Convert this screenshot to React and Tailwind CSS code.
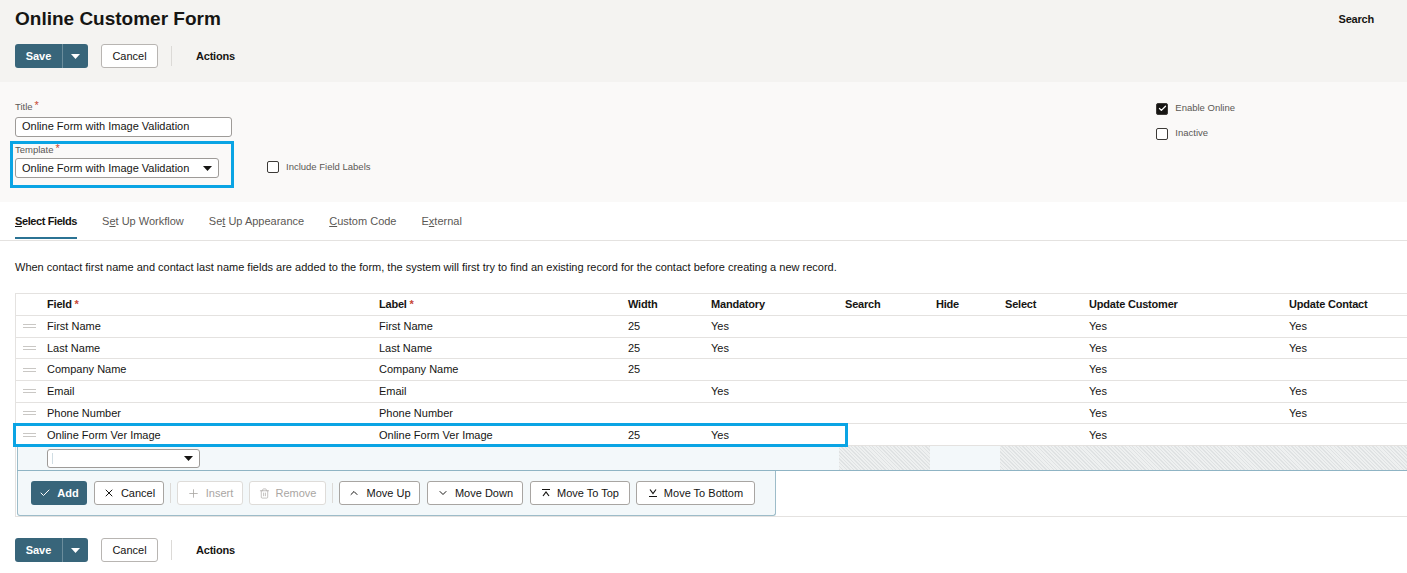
import React from 'react';
import { Check, X, Plus, Trash2, ChevronUp, ChevronDown } from 'lucide-react';

const font = { fontFamily: '"Liberation Sans", Arial, sans-serif' };

const Caret = ({ className = '' }) => (
  <svg width="9" height="5" viewBox="0 0 9 5" className={className}>
    <path d="M0 0h9L4.5 5z" fill="currentColor" />
  </svg>
);

const SaveBar = () => (
  <div className="flex items-center h-6">
    <div className="flex h-6 rounded-[3px] overflow-hidden bg-[#38657a] text-white">
      <button className="w-[47px] text-[11px] font-bold">Save</button>
      <div className="w-px bg-[#6b8d9c]" />
      <button className="w-[25px] flex items-center justify-center">
        <Caret />
      </button>
    </div>
    <button className="ml-[13px] h-6 w-[57px] rounded-[3px] border border-[#b8b5b2] bg-white text-[11px] text-[#161513]">
      Cancel
    </button>
    <div className="ml-[13px] h-5 w-px bg-[#dcdad7]" />
    <span className="ml-6 text-[11px] font-bold tracking-[-0.2px] text-[#161513]">Actions</span>
  </div>
);

const Box = ({ checked }) => (
  <span
    className={`w-[12px] h-[12px] rounded-[2px] border border-[#3c3a37] flex items-center justify-center ${
      checked ? 'bg-[#161513]' : 'bg-white'
    }`}
  >
    {checked && <Check size={9} strokeWidth={3.5} className="text-white" />}
  </span>
);

const Label = ({ children }) => (
  <div className="text-[9.5px] text-[#5b5855] leading-none flex items-start gap-[2px]">
    {children}
    <span className="text-[#c74634] text-[11px] leading-[7px]">*</span>
  </div>
);

const Tab = ({ pre, u, post, active }) => (
  <div className="relative h-full flex items-center">
    <span
      className={`text-[11px] ${
        active ? 'text-[#161513] font-bold tracking-[-0.4px]' : 'text-[#5b5855]'
      }`}
    >
      {pre}
      <span className="underline">{u}</span>
      {post}
    </span>
    {active && <div className="absolute left-0 right-0 bottom-[1px] h-[2px] bg-[#2b7394]" />}
  </div>
);

const cols = 'grid-cols-[25px_332px_249px_83px_134px_91px_69px_84px_200px_1fr]';

const rows = [
  ['First Name', 'First Name', '25', 'Yes', 'Yes', 'Yes'],
  ['Last Name', 'Last Name', '25', 'Yes', 'Yes', 'Yes'],
  ['Company Name', 'Company Name', '25', '', 'Yes', ''],
  ['Email', 'Email', '', 'Yes', 'Yes', 'Yes'],
  ['Phone Number', 'Phone Number', '', '', 'Yes', 'Yes'],
  ['Online Form Ver Image', 'Online Form Ver Image', '25', 'Yes', 'Yes', ''],
];

const Handle = () => (
  <div className="flex flex-col gap-[2px] items-center">
    <div className="w-[13px] h-px bg-[#c9c7c4]" />
    <div className="w-[13px] h-px bg-[#c9c7c4]" />
  </div>
);

const hatch =
  'bg-[repeating-linear-gradient(45deg,#dfe2e3_0px,#dfe2e3_1px,#eef0f0_1px,#eef0f0_2.5px)]';

const ActBtn = ({ icon, children, disabled, w }) => (
  <button
    className={`h-6 ${w} rounded-[3px] border bg-white flex items-center justify-center gap-[6px] text-[11px] ${
      disabled ? 'border-[#dedcd9] text-[#a9a6a3]' : 'border-[#a8a5a2] text-[#161513]'
    }`}
  >
    {icon}
    {children}
  </button>
);

export default function App() {
  return (
    <div className="w-[1407px] h-[573px] bg-white overflow-hidden text-[#161513]" style={font}>
      {/* header */}
      <div className="h-[82px] bg-[#f4f3f1] px-[15px] pt-[8px]">
        <div className="flex justify-between items-center h-[22px]">
          <h1 className="text-[19px] font-bold">Online Customer Form</h1>
          <span className="text-[11px] font-bold tracking-[-0.2px] mr-[18px]">Search</span>
        </div>
        <div className="mt-[14px]">
          <SaveBar />
        </div>
      </div>

      {/* form */}
      <div className="h-[120px] bg-[#faf9f8] flex px-[15px] pt-[20px]">
        <div className="w-[219px]">
          <Label>Title</Label>
          <div className="mt-[5px] h-[20px] w-[217px] border border-[#9e9b98] rounded-[3px] bg-white flex items-center px-[6px] text-[11px]">
            Online Form with Image Validation
          </div>
          <div className="mt-[4px] -ml-[5px] w-[224px] h-[47px] border-[3px] border-[#0aa4e4] pl-[2px] pt-[1px]">
            <Label>Template</Label>
            <div className="mt-[4px] h-[20px] w-[204px] border border-[#9e9b98] rounded-[3px] bg-white flex items-center justify-between px-[6px] text-[11px]">
              Online Form with Image Validation
              <Caret className="text-[#161513]" />
            </div>
          </div>
        </div>
        <div className="ml-[33px] mt-[58px] flex items-center gap-[7px] h-[14px]">
          <Box />
          <span className="text-[9.5px] text-[#5b5855]">Include Field Labels</span>
        </div>
        <div className="ml-auto mr-[157px] flex flex-col gap-[12px]">
          <div className="flex items-center gap-[7px] h-[13px]">
            <Box checked />
            <span className="text-[9.5px] text-[#5b5855]">Enable Online</span>
          </div>
          <div className="flex items-center gap-[7px] h-[13px]">
            <Box />
            <span className="text-[9.5px] text-[#5b5855]">Inactive</span>
          </div>
        </div>
      </div>

      {/* tabs */}
      <div className="h-[39px] border-b border-[#e4e2e0] flex gap-[25px] px-[15px]">
        <Tab u="S" post="elect Fields" active />
        <Tab pre="S" u="e" post="t Up Workflow" />
        <Tab pre="Se" u="t" post=" Up Appearance" />
        <Tab u="C" post="ustom Code" />
        <Tab pre="E" u="x" post="ternal" />
      </div>

      <p className="mt-[19px] px-[15px] text-[11px] leading-[14px]">
        When contact first name and contact last name fields are added to the form, the system will first try to find an existing record for the contact before creating a new record.
      </p>

      {/* table */}
      <div className="mt-[19px] ml-[15px] border-l border-t border-[#e4e2e0]">
        <div
          className={`grid ${cols} h-[22px] items-center text-[11px] font-bold tracking-[-0.2px] border-b border-[#e4e2e0]`}
        >
          <div />
          <div className="pl-[6px]">
            Field <span className="text-[#c74634]">*</span>
          </div>
          <div className="pl-[6px]">
            Label <span className="text-[#c74634]">*</span>
          </div>
          <div className="pl-[6px]">Width</div>
          <div className="pl-[6px]">Mandatory</div>
          <div className="pl-[6px]">Search</div>
          <div className="pl-[6px]">Hide</div>
          <div className="pl-[6px]">Select</div>
          <div className="pl-[6px]">Update Customer</div>
          <div className="pl-[6px]">Update Contact</div>
        </div>
        {rows.map((r, i) => (
          <div key={i} className="relative">
            <div className={`grid ${cols} h-[21.7px] items-center text-[11px] border-b border-[#e4e2e0]`}>
              <div className="flex justify-center pl-[2px]">
                <Handle />
              </div>
              <div className="pl-[6px]">{r[0]}</div>
              <div className="pl-[6px]">{r[1]}</div>
              <div className="pl-[6px]">{r[2]}</div>
              <div className="pl-[6px]">{r[3]}</div>
              <div />
              <div />
              <div />
              <div className="pl-[6px]">{r[4]}</div>
              <div className="pl-[6px]">{r[5]}</div>
            </div>
            {i === 5 && (
              <div className="absolute left-[-3px] top-[-1px] w-[835px] h-[24px] border-[3px] border-[#0aa4e4]" />
            )}
          </div>
        ))}

        {/* edit row */}
        <div className="flex h-[25px] bg-[#f3f8fa] border-b border-[#8fb4c4] ml-[1px]">
          <div className="w-[822px] border-l border-[#9dbcc9] pl-[29px] flex items-center">
            <div className="h-[19px] w-[153px] border border-[#9e9b98] rounded-[3px] bg-white flex items-center justify-between pl-[4px] pr-[6px]">
              <div className="w-px h-[11px] bg-[#d0dde3]" />
              <Caret className="text-[#161513]" />
            </div>
          </div>
          <div className={`w-[91px] ${hatch}`} />
          <div className="w-[70px]" />
          <div className={`flex-1 ${hatch}`} />
        </div>

        {/* action panel */}
        <div className="border-b border-[#e4e2e0]">
          <div className="ml-[1px] w-[759px] h-[45px] bg-[#f3f8fa] border-l border-r border-b border-[#9dbcc9] rounded-b-[3px] flex items-center pl-[13px]">
            <button className="h-6 w-[56px] rounded-[3px] bg-[#38657a] text-white text-[11px] font-bold flex items-center justify-center gap-[6px]">
              <Check size={12} strokeWidth={2} />
              Add
            </button>
            <div className="ml-[7px]">
              <ActBtn w="w-[70px]" icon={<X size={12} strokeWidth={2} />}>Cancel</ActBtn>
            </div>
            <div className="ml-[6px] h-5 w-px bg-[#dcdad7]" />
            <div className="ml-[6px]">
              <ActBtn w="w-[66px]" disabled icon={<Plus size={13} strokeWidth={1.5} />}>Insert</ActBtn>
            </div>
            <div className="ml-[6px]">
              <ActBtn w="w-[77px]" disabled icon={<Trash2 size={11} strokeWidth={1.5} />}>Remove</ActBtn>
            </div>
            <div className="ml-[6px] h-5 w-px bg-[#dcdad7]" />
            <div className="ml-[6px]">
              <ActBtn w="w-[81px]" icon={<ChevronUp size={12} strokeWidth={2} />}>Move Up</ActBtn>
            </div>
            <div className="ml-[7px]">
              <ActBtn w="w-[96px]" icon={<ChevronDown size={12} strokeWidth={2} />}>Move Down</ActBtn>
            </div>
            <div className="ml-[7px]">
              <ActBtn
                w="w-[100px]"
                icon={
                  <svg width="10" height="10" viewBox="0 0 10 10" fill="none" stroke="currentColor" strokeWidth="1.2">
                    <path d="M1 1.5h8M2 8l3-4 3 4" />
                  </svg>
                }
              >
                Move To Top
              </ActBtn>
            </div>
            <div className="ml-[6px]">
              <ActBtn
                w="w-[119px]"
                icon={
                  <svg width="10" height="10" viewBox="0 0 10 10" fill="none" stroke="currentColor" strokeWidth="1.2">
                    <path d="M2 1.5l3 4 3-4M1 8.5h8" />
                  </svg>
                }
              >
                Move To Bottom
              </ActBtn>
            </div>
          </div>
        </div>
      </div>

      <div className="mt-[21px] px-[15px]">
        <SaveBar />
      </div>
    </div>
  );
}
